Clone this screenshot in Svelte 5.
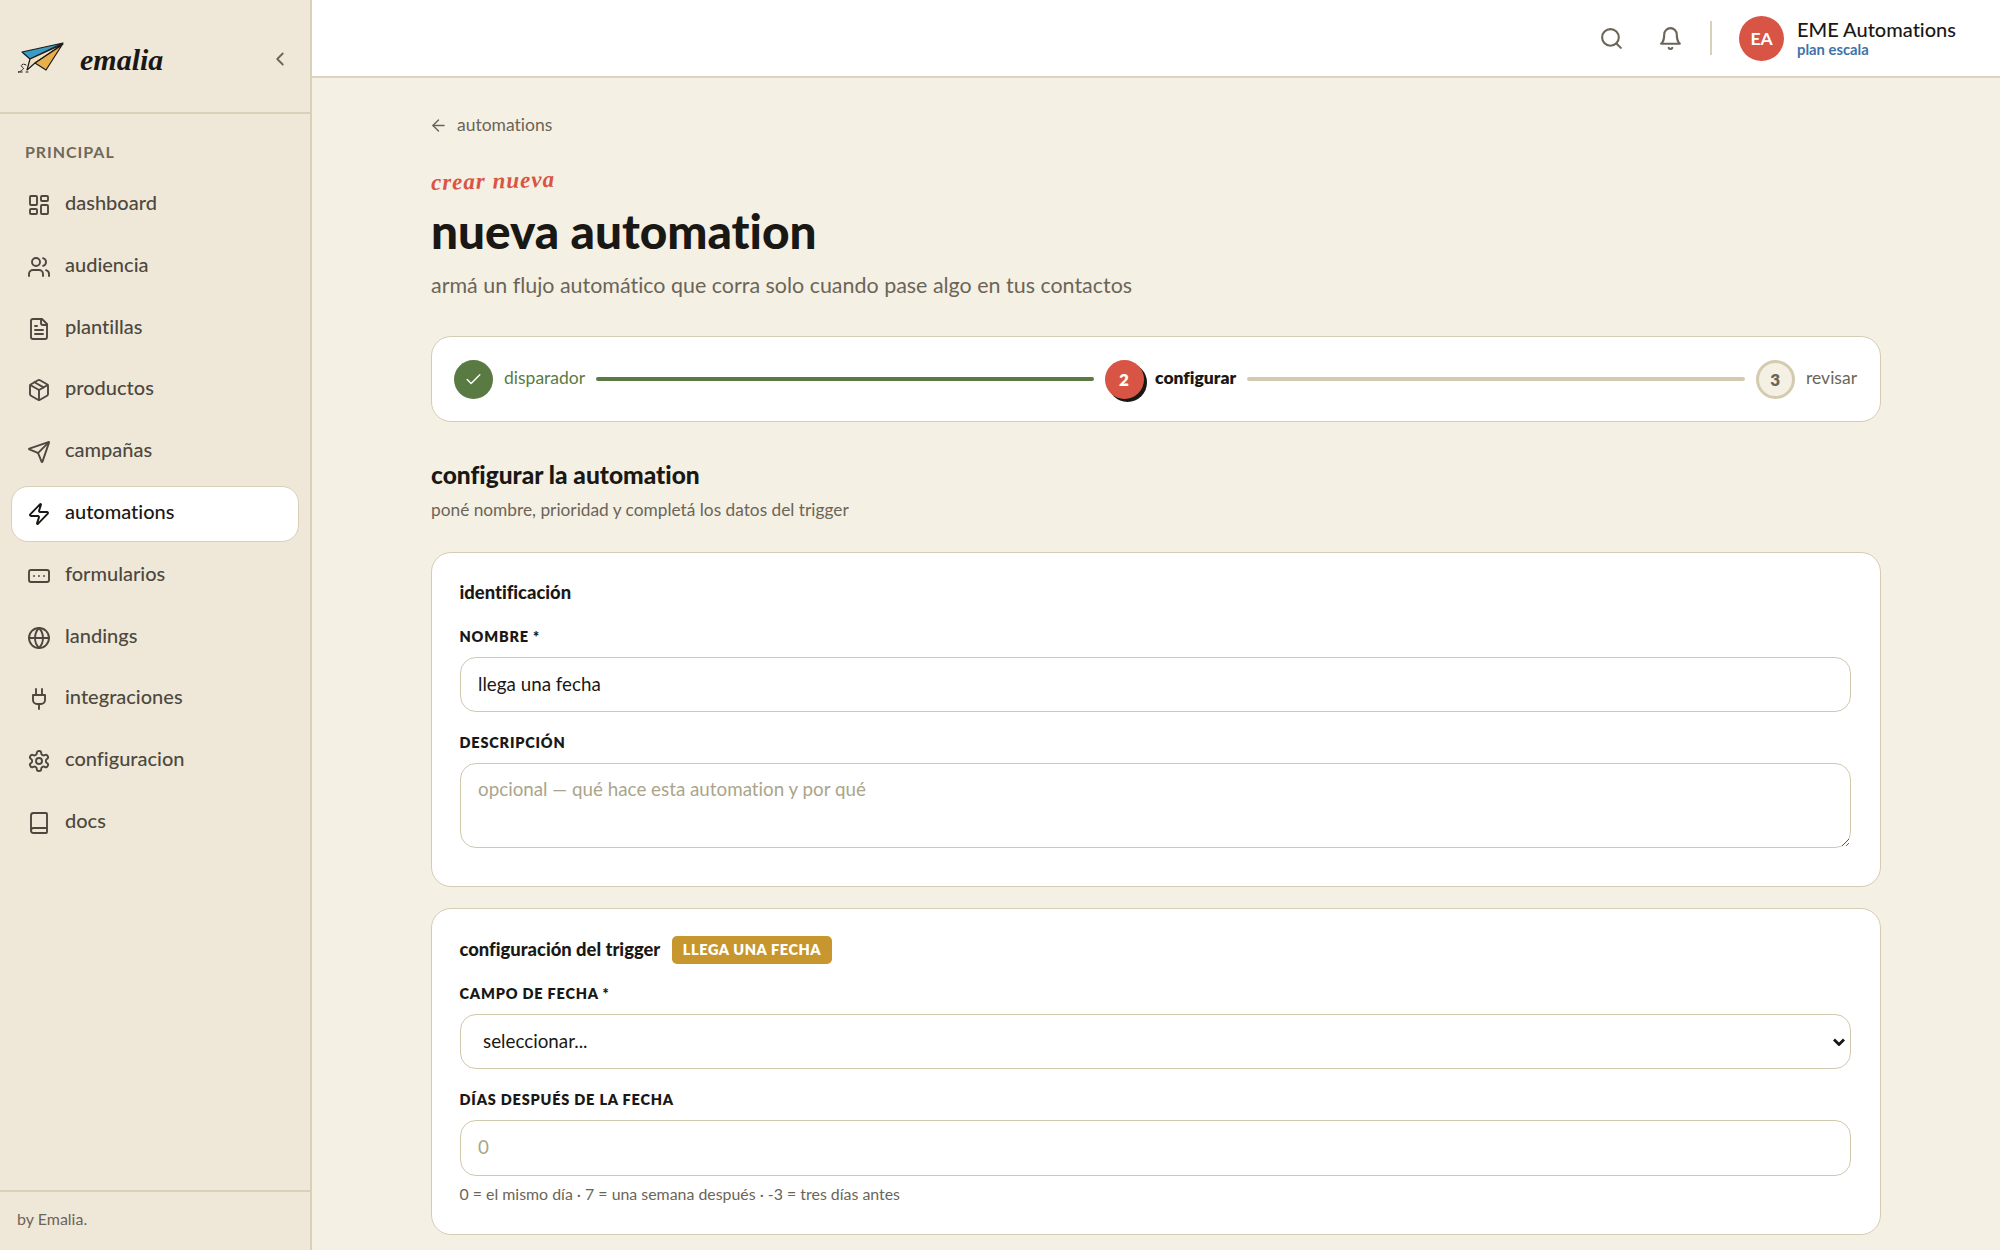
<script>
  const icons = {
    dashboard: ['M4 3h5a1 1 0 0 1 1 1v7a1 1 0 0 1-1 1H4a1 1 0 0 1-1-1V4a1 1 0 0 1 1-1z','M15 3h5a1 1 0 0 1 1 1v3a1 1 0 0 1-1 1h-5a1 1 0 0 1-1-1V4a1 1 0 0 1 1-1z','M15 12h5a1 1 0 0 1 1 1v7a1 1 0 0 1-1 1h-5a1 1 0 0 1-1-1v-7a1 1 0 0 1 1-1z','M4 16h5a1 1 0 0 1 1 1v3a1 1 0 0 1-1 1H4a1 1 0 0 1-1-1v-3a1 1 0 0 1 1-1z'],
    users: ['M16 21v-2a4 4 0 0 0-4-4H6a4 4 0 0 0-4 4v2','M13 7a4 4 0 1 1-8 0 4 4 0 0 1 8 0z','M22 21v-2a4 4 0 0 0-3-3.87','M16 3.13a4 4 0 0 1 0 7.75'],
    file: ['M15 2H6a2 2 0 0 0-2 2v16a2 2 0 0 0 2 2h12a2 2 0 0 0 2-2V7Z','M14 2v4a2 2 0 0 0 2 2h4','M10 9H8','M16 13H8','M16 17H8'],
    box: ['M11 21.73a2 2 0 0 0 2 0l7-4A2 2 0 0 0 21 16V8a2 2 0 0 0-1-1.73l-7-4a2 2 0 0 0-2 0l-7 4A2 2 0 0 0 3 8v8a2 2 0 0 0 1 1.73z','M12 22V12','M3.29 7 12 12l8.71-5','M7.5 4.27l9 5.15'],
    send: ['M14.536 21.686a.5.5 0 0 0 .937-.024l6.5-19a.496.496 0 0 0-.635-.635l-19 6.5a.5.5 0 0 0-.024.937l7.93 3.18a2 2 0 0 1 1.112 1.11z','m21.854 2.147-10.94 10.939'],
    zap: ['M4 14a1 1 0 0 1-.78-1.63l9.9-10.2a.5.5 0 0 1 .86.46l-1.92 6.02A1 1 0 0 0 13 10h7a1 1 0 0 1 .78 1.63l-9.9 10.2a.5.5 0 0 1-.86-.46l1.92-6.02A1 1 0 0 0 11 14z'],
    form: ['M4 6h16a2 2 0 0 1 2 2v8a2 2 0 0 1-2 2H4a2 2 0 0 1-2-2V8a2 2 0 0 1 2-2z','M12 12h.01','M17 12h.01','M7 12h.01'],
    globe: ['M22 12a10 10 0 1 1-20 0 10 10 0 0 1 20 0z','M12 2a14.5 14.5 0 0 0 0 20 14.5 14.5 0 0 0 0-20','M2 12h20'],
    plug: ['M12 22v-5','M9 8V2','M15 8V2','M18 8v5a4 4 0 0 1-4 4h-4a4 4 0 0 1-4-4V8Z'],
    gear: ['M12.22 2h-.44a2 2 0 0 0-2 2v.18a2 2 0 0 1-1 1.73l-.43.25a2 2 0 0 1-2 0l-.15-.08a2 2 0 0 0-2.73.73l-.22.38a2 2 0 0 0 .73 2.73l.15.1a2 2 0 0 1 1 1.72v.51a2 2 0 0 1-1 1.74l-.15.09a2 2 0 0 0-.73 2.73l.22.38a2 2 0 0 0 2.73.73l.15-.08a2 2 0 0 1 2 0l.43.25a2 2 0 0 1 1 1.73V20a2 2 0 0 0 2 2h.44a2 2 0 0 0 2-2v-.18a2 2 0 0 1 1-1.73l.43-.25a2 2 0 0 1 2 0l.15.08a2 2 0 0 0 2.73-.73l.22-.39a2 2 0 0 0-.73-2.73l-.15-.08a2 2 0 0 1-1-1.74v-.5a2 2 0 0 1 1-1.74l.15-.09a2 2 0 0 0 .73-2.73l-.22-.38a2 2 0 0 0-2.73-.73l-.15.08a2 2 0 0 1-2 0l-.43-.25a2 2 0 0 1-1-1.73V4a2 2 0 0 0-2-2z','M15 12a3 3 0 1 1-6 0 3 3 0 0 1 6 0z'],
    book: ['M4 19.5v-15A2.5 2.5 0 0 1 6.5 2H19a1 1 0 0 1 1 1v18a1 1 0 0 1-1 1H6.5a1 1 0 0 1 0-5H20']
  };
  const nav = [
    ['dashboard','dashboard'],['audiencia','users'],['plantillas','file'],['productos','box'],['campañas','send'],
    ['automations','zap'],['formularios','form'],['landings','globe'],['integraciones','plug'],['configuracion','gear'],['docs','book']
  ];
</script>

<div class="app">
  <aside class="sidebar">
    <div class="brand">
      <svg class="logo" viewBox="0 0 46 32">
        <path d="M45 1 4 10l8 7z" fill="#3a9cc4" stroke="#1a1a1a" stroke-width="1.2"/>
        <path d="M45 2 12 17l-3 11 8-7z" fill="#f1dfc0" stroke="#1a1a1a" stroke-width="1.2"/>
        <path d="M44 3 17 21l11 7z" fill="#e8b04c" stroke="#1a1a1a" stroke-width="1.2"/>
        <path d="M8 23c-3-2-6 0-4 2 2 1 2 2 0 3-1 1-2 2-4 2h5M8 30h3" stroke="#1a1a1a" stroke-width="1" stroke-dasharray="2 1" fill="none"/>
      </svg>
      <span class="wordmark">emalia</span>
      <svg class="collapse" viewBox="0 0 24 24"><path d="m15 18-6-6 6-6"/></svg>
    </div>
    <div class="section">PRINCIPAL</div>
    <nav>
      {#each nav as [label, icon]}
        <div class="item" class:active={label === 'automations'}>
          <svg class="ic" viewBox="0 0 24 24">
            {#each icons[icon] as d}<path {d}/>{/each}
          </svg>
          <span>{label}</span>
        </div>
      {/each}
    </nav>
    <div class="side-foot">by Emalia.</div>
  </aside>

  <div class="main">
    <header class="top">
      <svg class="top-ic" viewBox="0 0 24 24"><path d="M19 11a8 8 0 1 1-16 0 8 8 0 0 1 16 0z"/><path d="m21 21-4.3-4.3"/></svg>
      <svg class="top-ic bell" viewBox="0 0 24 24"><path d="M6 8a6 6 0 0 1 12 0c0 7 3 9 3 9H3s3-2 3-9"/><path d="M10.3 21a1.94 1.94 0 0 0 3.4 0"/></svg>
      <div class="vr"></div>
      <div class="avatar">EA</div>
      <div class="who">
        <div class="org">EME Automations</div>
        <div class="plan">plan escala</div>
      </div>
    </header>

    <main class="content">
      <div class="back">
        <svg viewBox="0 0 24 24"><path d="m12 19-7-7 7-7"/><path d="M19 12H5"/></svg>
        <span>automations</span>
      </div>
      <div class="kicker">crear nueva</div>
      <h1>nueva automation</h1>
      <p class="lead">armá un flujo automático que corra solo cuando pase algo en tus contactos</p>

      <div class="stepper">
        <div class="dot done"><svg viewBox="0 0 24 24"><path d="M20 6 9 17l-5-5"/></svg></div>
        <span class="st st-done">disparador</span>
        <div class="line line-done"></div>
        <div class="dot now">2</div>
        <span class="st st-now">configurar</span>
        <div class="line"></div>
        <div class="dot todo">3</div>
        <span class="st">revisar</span>
      </div>

      <h2>configurar la automation</h2>
      <p class="sub">poné nombre, prioridad y completá los datos del trigger</p>

      <section class="card first">
        <h3>identificación</h3>
        <label for="n">NOMBRE *</label>
        <input id="n" class="field" value="llega una fecha" />
        <label for="d" class="next">DESCRIPCIÓN</label>
        <textarea id="d" class="field area" placeholder="opcional — qué hace esta automation y por qué"></textarea>
      </section>

      <section class="card second">
        <div class="title-row">
          <h3>configuración del trigger</h3>
          <span class="badge">LLEGA UNA FECHA</span>
        </div>
        <label for="c" class="after-title">CAMPO DE FECHA *</label>
        <div class="sel-wrap">
          <select id="c" class="field sel"><option>seleccionar...</option></select>
          <svg class="chev" viewBox="0 0 12 8"><path d="M1 1.5 6 6.5l5-5"/></svg>
        </div>
        <label for="x" class="next">DÍAS DESPUÉS DE LA FECHA</label>
        <input id="x" class="field tall" placeholder="0" />
        <p class="help">0 = el mismo día · 7 = una semana después · -3 = tres días antes</p>
      </section>
    </main>
  </div>
</div>

<style>
  :global(body) { margin: 0; background: #f5f0e4; }
  * { box-sizing: border-box; }
  .app {
    display: flex; width: 2000px; height: 1250px; overflow: hidden;
    font-family: "Lato", "Noto Sans", sans-serif; color: #1a1815;
    font-variant-ligatures: none;
  }
  svg { fill: none; stroke: currentColor; stroke-width: 2; stroke-linecap: round; stroke-linejoin: round; flex: none; }
  .sidebar {
    width: 312px; flex: none; height: 1250px; background: #efe8d9;
    border-right: 2px solid #d9d0ba; display: flex; flex-direction: column;
  }
  .brand {
    height: 114px; flex: none; border-bottom: 2px solid #d9d0ba;
    display: flex; align-items: center; padding: 0 19px 0 18px;
  }
  .logo { width: 46px; height: 32px; stroke: none; margin-top: 4px; }
  .wordmark {
    font-family: "Liberation Serif", serif; font-style: italic; font-weight: 700;
    font-size: 30px; margin-left: 16px; margin-top: 7px; color: #1a1815;
  }
  .collapse { width: 22px; height: 22px; margin-left: auto; color: #6b6558; margin-top: 5px; }
  .section {
    font-size: 16px; font-weight: 700; letter-spacing: 0.95px; color: #6f6959;
    margin: 28px 0 0 25px; line-height: 20px;
  }
  nav { display: flex; flex-direction: column; gap: 5.8px; padding: 15px 11px 0; }
  .item {
    height: 56px; display: flex; align-items: center; gap: 14.5px; padding-left: 14.5px;
    border: 1.5px solid transparent; border-radius: 17px;
    font-size: 20px; color: #4d483e; font-weight: 500;
  }
  .item span { position: relative; top: -3px; }
  .item .ic { width: 24px; height: 24px; stroke-width: 1.9; }
  .item.active { background: #fff; border-color: #d9d0ba; color: #1a1815; }
  .side-foot {
    margin-top: auto; height: 60px; border-top: 2px solid #d9d0ba;
    display: flex; align-items: center; padding: 0 0 5px 17px; font-size: 16px; color: #6b6558;
  }
  .main { flex: 1; min-width: 0; display: flex; flex-direction: column; }
  .top {
    height: 78px; flex: none; background: #fff; border-bottom: 2px solid #dcd3bf;
    display: flex; align-items: center; justify-content: flex-end; padding: 0 44px 0 0;
  }
  .top-ic { width: 25px; height: 25px; color: #6b6558; }
  .bell { margin-left: 34px; }
  .vr { width: 2px; height: 34px; background: #d9d0ba; margin: 0 27px; }
  .avatar {
    width: 45px; height: 45px; border-radius: 50%; background: #d85545; color: #fff;
    display: flex; align-items: center; justify-content: center; font-size: 17.5px; font-weight: 700;
  }
  .who { margin-left: 13px; position: relative; top: -1px; }
  .org { font-size: 20px; line-height: 24px; font-weight: 500; color: #1a1815; }
  .plan { font-size: 14.8px; line-height: 17px; font-weight: 700; color: #3f73a8; }
  .content { width: 1450px; margin: 0 auto; flex: none; padding-top: 37px; }
  .back { display: flex; align-items: center; gap: 9px; font-size: 17.5px; color: #6b6558; height: 20px; }
  .back svg { width: 19px; height: 19px; margin-left: -2px; stroke-width: 1.8; }
  .back span { position: relative; top: -1px; }
  .kicker {
    font-family: "Liberation Serif", serif; font-style: italic; font-weight: 700;
    font-size: 23px; letter-spacing: 1px; color: #d85545; margin-top: 34.5px; line-height: 26px;
    transform: rotate(-1.5deg); transform-origin: left center; width: max-content;
  }
  h1 { margin: 7.5px 0 0; font-size: 47.7px; line-height: 56px; font-weight: 900; color: #1a1815; }
  .lead { margin: 11px 0 0; font-size: 21.45px; line-height: 30px; color: #6b6558; }
  .stepper {
    margin-top: 36px; height: 86px; background: #fff; border: 1.5px solid #d6ccb4; border-radius: 20px;
    display: flex; align-items: center; padding: 0 23px 0 21.5px;
  }
  .dot {
    width: 39px; height: 39px; border-radius: 50%; flex: none;
    display: flex; align-items: center; justify-content: center; font-weight: 800; font-size: 17px;
  }
  .done { background: #5a7a44; color: #fff; }
  .done svg { width: 19px; height: 19px; stroke-width: 1.8; }
  .now { background: #d85545; color: #fff; box-shadow: 3px 3px 0 #1a1815; }
  .todo { background: #f5f0e4; border: 3px solid #d4caae; color: #6b6558; }
  .st { font-size: 17.5px; color: #6b6558; margin-left: 11.5px; position: relative; top: -2px; white-space: nowrap; }
  .st-done { color: #5a7a44; }
  .st-now { color: #1a1815; font-weight: 800; }
  .line { flex: 1; height: 4px; border-radius: 2px; background: #d4caae; margin: 0 11px; }
  .line-done { background: #5a7a44; }
  h2 { margin: 38px 0 0; font-size: 24.5px; line-height: 30px; font-weight: 900; color: #1a1815; }
  .sub { margin: 8px 0 0; font-size: 17.3px; line-height: 24px; color: #6b6558; }
  .card { background: #fff; border: 1.5px solid #d6ccb4; border-radius: 20px; padding: 26.5px 29px 0 27.5px; }
  .first { margin-top: 30px; height: 335px; }
  .second { margin-top: 21px; height: 327px; }
  h3 { margin: 0; font-size: 18.4px; line-height: 24px; font-weight: 900; color: #1a1815; }
  .second h3 { position: relative; top: -1px; }
  label {
    display: block; font-size: 14.5px; line-height: 20px; font-weight: 800; letter-spacing: 0.8px;
    margin-top: 22px; margin-bottom: 11px; color: #1a1815; position: relative; top: 1px;
  }
  label.next { margin-top: 20px; }
  label.after-title { margin-top: 19px; }
  .field {
    display: block; width: 100%; height: 55px; border: 1.5px solid #d2c8ae; border-radius: 16px;
    background: #fff; padding: 0 17.5px 2px; font-family: inherit; font-size: 18.8px; color: #1a1815; outline: none;
    font-variant-ligatures: none;
  }
  .field::placeholder { color: #aaa58a; opacity: 1; }
  .area { height: 85px; padding-top: 13px; resize: vertical; }
  .sel-wrap { position: relative; }
  .sel { padding: 0 0 2px 22.5px; appearance: none; }
  .chev { position: absolute; right: 6px; top: 24px; width: 12px; height: 8px; stroke-width: 2.8; stroke-linecap: butt; stroke-linejoin: miter; color: #1a1815; pointer-events: none; }
  .tall { height: 56px; }
  .title-row { display: flex; align-items: center; gap: 11.5px; height: 28px; }
  .badge {
    height: 28px; display: flex; align-items: center; padding: 0 11px; border-radius: 5px;
    background: #c8962e; color: #fff; font-size: 14.5px; font-weight: 800; letter-spacing: 0.6px;
  }
  .help { margin: 8px 0 0; font-size: 15.9px; line-height: 20px; color: #6b6558; }
</style>
